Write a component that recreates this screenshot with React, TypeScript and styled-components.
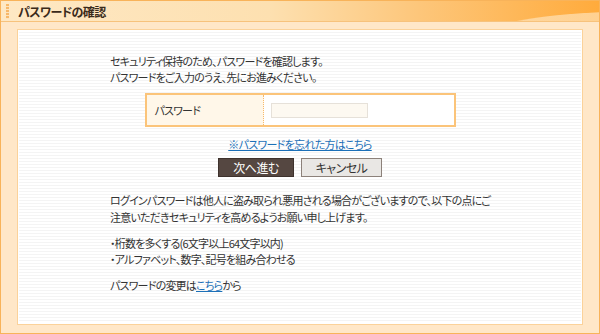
import styled, { createGlobalStyle } from "styled-components"

const GlobalStyle = createGlobalStyle`
  html, body {
    margin: 0;
    padding: 0;
  }
  body {
    font-family: "Noto Sans CJK JP", "Noto Sans", sans-serif;
    font-size: 12px;
    color: #333;
  }
`

const Frame = styled.div`
  width: 600px;
  height: 334px;
  box-sizing: border-box;
  border: 1px solid #f8b35a;
  background: #ffe7c8;
  display: flex;
  flex-direction: column;
`

const Header = styled.div`
  height: 21px;
  flex: none;
  box-sizing: border-box;
  display: flex;
  align-items: center;
  gap: 9px;
  padding-left: 5px;
  border-bottom: 1px solid #f7c27c;
  background:
    radial-gradient(ellipse 260px 40px at 640px 34px, rgba(255, 240, 215, 0.55) 0 58%, transparent 60%),
    linear-gradient(90deg, #fee8c4 0%, #fde0b0 45%, #fdc67a 70%, #ffab3c 100%);
`

const HeaderMark = styled.span`
  width: 3px;
  height: 15px;
  background: repeating-linear-gradient(180deg, #f7b869 0 2px, #fde3bd 2px 3px);
`

const Title = styled.h1`
  margin: 0;
  font-size: 12px;
  font-weight: bold;
  color: #3a2a1a;
  font-feature-settings: "palt";
  letter-spacing: -0.6px;
`

const Body = styled.div`
  flex: 1;
  padding: 7px 16px 8px 16px;
  display: flex;
`

const Panel = styled.div`
  flex: 1;
  border: 1px solid #fbd29a;
  box-shadow: inset 0 0 0 1px #fff;
  background: repeating-linear-gradient(180deg, #ffffff 0 2px, #f4f4f4 2px 3px);
  padding-top: 23px;
`

const Column = styled.div`
  width: 380px;
  margin: 0 auto;
  display: flex;
  flex-direction: column;
  font-size: 11px;
  letter-spacing: -0.8px;
  font-feature-settings: "palt";
  white-space: nowrap;
`

const Lead = styled.p`
  margin: 0;
  line-height: 16px;
`

const Para = styled.p<{ $top: number; $lh: number }>`
  margin: ${p => p.$top}px 0 0;
  line-height: ${p => p.$lh}px;
`

const FormBox = styled.div`
  align-self: center;
  width: 311px;
  height: 34px;
  box-sizing: border-box;
  margin-top: 8px;
  border: 2px solid #fbc47a;
  display: flex;
  background: #fff;
`

const Label = styled.div`
  width: 108px;
  background: #fff7e9;
  border-right: 1px dotted #f6b96c;
  display: flex;
  align-items: center;
  padding-left: 8px;
`

const Field = styled.div`
  flex: 1;
  display: flex;
  align-items: center;
  padding-left: 7px;
`

const Input = styled.input`
  width: 97px;
  height: 15px;
  box-sizing: border-box;
  border: 1px solid #e6e1d9;
  background: #fdf9f1;
  padding: 0;
  outline: none;
`

const Forgot = styled.a`
  align-self: center;
  margin-top: 11px;
  font-size: 11px;
  letter-spacing: -0.7px;
  color: #1c70b8;
  text-decoration: underline;
  line-height: 13px;
`

const Buttons = styled.div`
  align-self: center;
  display: flex;
  gap: 7px;
  margin-top: 7px;
`

const Button = styled.button<{ $primary?: boolean }>`
  height: 19px;
  box-sizing: border-box;
  padding: 0;
  font-family: inherit;
  font-size: 12px;
  line-height: 17px;
  letter-spacing: -0.5px;
  font-feature-settings: "palt";
  width: ${p => (p.$primary ? "76px" : "81px")};
  border: 1px solid ${p => (p.$primary ? "#3e322d" : "#8c817a")};
  background: ${p => (p.$primary ? "#554741" : "#e9e7e4")};
  color: ${p => (p.$primary ? "#fff" : "#333")};
`

const Link = styled.a`
  color: #1c70b8;
  text-decoration: underline;
`

export default function App() {
  return (
    <>
      <GlobalStyle />
      <Frame>
        <Header>
          <HeaderMark />
          <Title>パスワードの確認</Title>
        </Header>
        <Body>
          <Panel>
            <Column>
              <Lead>
                セキュリティ保持のため、パスワードを確認します。
                <br />
                パスワードをご入力のうえ、先にお進みください。
              </Lead>
              <FormBox>
                <Label>パスワード</Label>
                <Field>
                  <Input type="password" />
                </Field>
              </FormBox>
              <Forgot href="#">※パスワードを忘れた方はこちら</Forgot>
              <Buttons>
                <Button $primary>次へ進む</Button>
                <Button>キャンセル</Button>
              </Buttons>
              <Para $top={15} $lh={17}>
                ログインパスワードは他人に盗み取られ悪用される場合がございますので、以下の点にご
                <br />
                注意いただきセキュリティを高めるようお願い申し上げます。
              </Para>
              <Para $top={9} $lh={16}>
                ・桁数を多くする(6文字以上64文字以内)
                <br />
                ・アルファベット、数字、記号を組み合わせる
              </Para>
              <Para $top={10} $lh={16}>
                パスワードの変更は<Link href="#">こちら</Link>から
              </Para>
            </Column>
          </Panel>
        </Body>
      </Frame>
    </>
  )
}
